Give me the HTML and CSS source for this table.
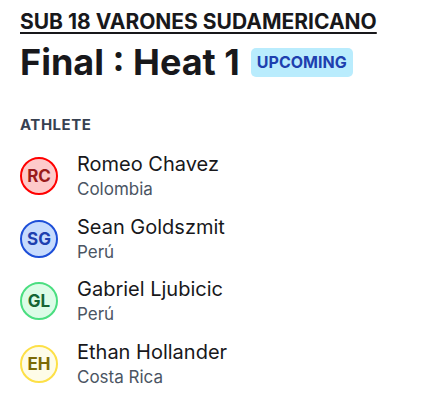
FILE: index.html
```html
<!DOCTYPE html>
<html>
<head>
<meta charset="utf-8">
<link rel="stylesheet" href="styles.css">
</head>
<body>
<div class="page">
  <h2 class="category">SUB 18 VARONES SUDAMERICANO</h2>
  <div class="heading">
    <h1 class="title">Final : Heat 1</h1>
    <span class="badge">UPCOMING</span>
  </div>
  <div class="section-label">ATHLETE</div>
  <ul class="list">
    <li class="row">
      <span class="avatar red">RC</span>
      <div class="info"><div class="name">Romeo Chavez</div><div class="country">Colombia</div></div>
    </li>
    <li class="row">
      <span class="avatar blue">SG</span>
      <div class="info"><div class="name">Sean Goldszmit</div><div class="country">Perú</div></div>
    </li>
    <li class="row">
      <span class="avatar green">GL</span>
      <div class="info"><div class="name">Gabriel Ljubicic</div><div class="country">Perú</div></div>
    </li>
    <li class="row">
      <span class="avatar yellow">EH</span>
      <div class="info"><div class="name">Ethan Hollander</div><div class="country">Costa Rica</div></div>
    </li>
  </ul>
</div>
</body>
</html>
```
FILE: styles.css
```css
* { box-sizing: border-box; }
body {
  margin: 0;
  background: #fff;
  font-family: Inter, "Noto Sans", sans-serif;
  color: #18181b;
}
.page {
  padding: 8px 20px;
}
.category {
  margin: 0;
  font-size: 21px;
  line-height: 28px;
  font-weight: 700;
  text-decoration: underline;
  text-underline-offset: 3px;
  text-decoration-thickness: 2px;
  color: #18181b;
}
.heading {
  display: flex;
  align-items: center;
  gap: 11px;
  margin-top: 4px;
}
.title {
  margin: 0;
  font-size: 36px;
  line-height: 44px;
  font-weight: 700;
}
.badge {
  background: #b9ecfd;
  color: #1e40af;
  font-weight: 700;
  font-size: 16px;
  line-height: 21px;
  padding: 4px 6px;
  border-radius: 5px;
}
.section-label {
  margin-top: 31px;
  font-size: 15px;
  line-height: 20px;
  font-weight: 700;
  color: #374151;
  letter-spacing: 0.5px;
}
.list {
  list-style: none;
  margin: 16px 0 0;
  padding: 0;
  display: flex;
  flex-direction: column;
  gap: 12.5px;
}
.row {
  display: flex;
  align-items: center;
  gap: 19px;
}
.avatar {
  width: 38px;
  height: 38px;
  border-radius: 50%;
  border: 2px solid;
  display: flex;
  align-items: center;
  justify-content: center;
  font-size: 17px;
  font-weight: 700;
  flex-shrink: 0;
}
.red { border-color: #ff0000; background: #fecaca; color: #991b1b; }
.blue { border-color: #1d4ed8; background: #c7dbfd; color: #1e40af; }
.green { border-color: #4ade80; background: #dcfce7; color: #166534; }
.yellow { border-color: #fde047; background: #fefce8; color: #7c6a05; }
.name {
  font-size: 20px;
  line-height: 26px;
  color: #18181b;
}
.country {
  font-size: 17px;
  line-height: 24px;
  color: #4b5563;
}
```
